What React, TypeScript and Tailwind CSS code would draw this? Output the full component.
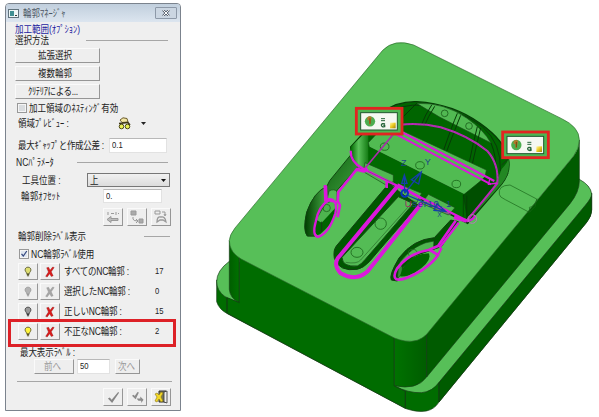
import React from "react";

const jp = "font-['Liberation_Sans','Noto_Sans_CJK_JP',sans-serif]";

function Label({ children, className = "" }: { children: React.ReactNode; className?: string }) {
  return (
    <span className={`inline-block origin-left scale-x-[0.85] whitespace-nowrap ${className}`}>{children}</span>
  );
}

function Btn({ children, className = "" }: { children: React.ReactNode; className?: string }) {
  return (
    <button
      className={`flex shrink-0 items-center justify-center border border-t-[#fafafa] border-l-[#fafafa] border-r-[#969696] border-b-[#969696] bg-[#eeeeee] ${className}`}
    >
      {children}
    </button>
  );
}

function Field({ children, className = "" }: { children: React.ReactNode; className?: string }) {
  return (
    <div className={`flex shrink-0 items-center border border-[#e2e2e2] border-t-[#b8b8b8] bg-white pl-[2px] ${className}`}>
      <Label>{children}</Label>
    </div>
  );
}

function Check({ on = false }: { on?: boolean }) {
  return (
    <div className="h-[10px] w-[10px] shrink-0 border border-[#989898] bg-[#f5f5f5]">
      <svg viewBox="0 0 8 8" className="block h-[8px] w-[8px]">
        <rect x="1" y="1" width="6" height="6" fill={on ? "#dfe6f0" : "#d9dcdf"} />
        {on && <path d="M1.5 3.8 3.3 6 6.8 1" fill="none" stroke="#33477e" strokeWidth="1.2" />}
      </svg>
    </div>
  );
}

function Bulb({ fill, stroke }: { fill: string; stroke: string }) {
  return (
    <svg viewBox="0 0 12 14" className="h-[12px] w-[10px]">
      <path d="M6 1.2C3.7 1.2 2.5 2.8 2.5 4.5 2.5 6.5 4.3 7 4.4 9H7.6C7.7 7 9.5 6.5 9.5 4.5 9.5 2.8 8.3 1.2 6 1.2Z" fill={fill} stroke={stroke} />
      <path d="M4.5 10h3M4.7 11.5h2.6" stroke={stroke} strokeWidth="1.2" />
    </svg>
  );
}

function Cross({ color, edge }: { color: string; edge: string }) {
  return (
    <svg viewBox="0 0 12 14" className="h-[12px] w-[10px]">
      <path d="M2 2 4.4 1.4 6 5 9.2 1 11 1.6 7.5 6.8 9.8 11.6 7.5 12.4 5.6 9 2.6 13 .8 12.2 4.1 7Z" fill={color} stroke={edge} strokeWidth=".4" />
    </svg>
  );
}

function LabelRow({ text, count, bulb, edge, off = false }: { text: string; count: string; bulb: string; edge: string; off?: boolean }) {
  return (
    <div className="flex h-[17px] items-center">
      <Btn className="h-[17px] w-[20px]"><Bulb fill={bulb} stroke={edge} /></Btn>
      <Btn className="ml-[2px] h-[17px] w-[20px]">
        <Cross color={off ? "#a6a6a6" : "#dc1c1c"} edge={off ? "#8c8c8c" : "#7d0c0c"} />
      </Btn>
      <div className="ml-[4px] w-[91px] text-[10px]"><Label className="tracking-[-0.25px]">{text}</Label></div>
      <Label className="text-[9px]">{count}</Label>
    </div>
  );
}

const grayRule = "h-px bg-[#a6a6a6]";

function Dialog() {
  return (
    <section className={`relative mt-[3px] ml-[5px] flex h-[408px] w-[176px] shrink-0 flex-col rounded-t-[4px] border border-[#7b838d] bg-[#efefef] text-[10px] leading-[11px] text-[#222] ${jp}`}>
      <header className="flex h-[18px] shrink-0 items-center rounded-t-[3px] bg-linear-to-b from-[#c1cfdd] to-[#dce5ef] pl-[2px]">
        <svg viewBox="0 0 11 9" className="h-[9px] w-[11px]">
          <rect x=".5" y=".5" width="10" height="8" fill="#eef6f6" stroke="#61737d" />
          <path d="M2 2h4v5H2z" fill="#3f8f92" />
          <path d="M7 6h2v1H7z" fill="#333" />
        </svg>
        <div className="ml-[4px] w-[132px] text-[#4b5561]"><Label>輪郭ﾏﾈｰｼﾞｬ</Label></div>
        <button className="flex h-[12px] w-[22px] items-center justify-center rounded-[1px] border border-[#8d99a8] bg-[#cbd6e2]">
          <svg viewBox="0 0 8 6" className="h-[6px] w-[8px]">
            <path d="m1 0 6 6M7 0 1 6" stroke="#5b6470" strokeWidth="2.4" />
            <path d="m1.2.2 5.6 5.6M6.8.2 1.2 5.8" stroke="#fff" strokeWidth="1" />
          </svg>
        </button>
      </header>
      <div className="mt-[2px] h-[11px] pl-[9px] text-[#1c1ca0]"><Label>加工範囲(ｵﾌﾟｼｮﾝ)</Label></div>
      <div className="flex h-[11px] items-center pl-[9px]">
        <div className="w-[71px]"><Label>選択方法</Label></div>
        <div className={`w-[82px] ${grayRule}`} />
      </div>
      <div className="mt-[2px] flex flex-col gap-[3px] pl-[9px]">
        <Btn className="h-[15px] w-[85px]"><Label className="origin-center">拡張選択</Label></Btn>
        <Btn className="h-[15px] w-[85px]"><Label className="origin-center">複数輪郭</Label></Btn>
        <Btn className="h-[15px] w-[85px]"><Label className="origin-center tracking-[-0.4px]">ｸﾘﾃﾘｱによる...</Label></Btn>
      </div>
      <div className="mt-[2px] flex h-[14px] items-center gap-[2px] pl-[11px]">
        <Check /><Label>加工領域のﾈｽﾃｨﾝｸﾞ有効</Label>
      </div>
      <div className="flex h-[16px] items-center pl-[12px]">
        <div className="w-[100px]"><Label className="tracking-[-0.1px]">領域ﾌﾟﾚﾋﾞｭｰ :</Label></div>
        <svg viewBox="0 0 13 13" className="h-[13px] w-[13px]">
          <path d="M2 3 5 .8 9 1.5 10 5 4 5.5Z" fill="#f2e6a4" stroke="#6b5c2c" />
          <path d="M1 6.5 10 5.5 12 8" fill="none" stroke="#3d3515" strokeWidth="1.5" />
          <circle cx="3.5" cy="9.5" r="2.3" fill="#e8ee54" stroke="#4d4a18" />
          <circle cx="9.5" cy="9.5" r="2.3" fill="#e8ee54" stroke="#4d4a18" />
        </svg>
        <svg viewBox="0 0 5 3" className="ml-[10px] h-[3px] w-[5px]"><path d="M0 0h5L2.5 3Z" fill="#222" /></svg>
      </div>
      <div className="mt-[7px] flex h-[15px] items-center pl-[12px]">
        <div className="w-[91px]"><Label className="tracking-[-0.35px]">最大ｷﾞｬｯﾌﾟと作成公差 :</Label></div>
        <Field className="h-[15px] w-[58px] text-[9px]">0.1</Field>
      </div>
      <div className="mt-[3px] flex h-[12px] items-center pl-[10px]">
        <div className="w-[61px]"><Label>NCﾊﾟﾗﾒｰﾀ</Label></div>
        <div className={`w-[91px] ${grayRule}`} />
      </div>
      <div className="mt-[5px] flex h-[14px] items-center pl-[16px]">
        <div className="w-[65px]"><Label>工具位置 :</Label></div>
        <div className="flex h-[14px] w-[83px] items-center justify-between border border-[#777] bg-linear-to-b from-[#f1f1f1] to-[#dcdcdc] pr-[3px] pl-[2px]">
          <Label>上</Label>
          <svg viewBox="0 0 5 3" className="h-[3px] w-[5px]"><path d="M0 0h5L2.5 3Z" fill="#111" /></svg>
        </div>
      </div>
      <div className="mt-[2px] flex h-[14px] items-center pl-[15px]">
        <div className="w-[82px]"><Label className="tracking-[0.2px]">輪郭ｵﾌｾｯﾄ</Label></div>
        <Field className="h-[14px] w-[59px] text-[9px]">0.</Field>
      </div>
      <div className="mt-[5px] flex h-[18px] gap-[4px] pl-[97px]">
        <Btn className="h-[18px] w-[20px]">
          <svg viewBox="0 0 14 14" className="h-[14px] w-[14px]" fill="none" stroke="#999">
            <path d="M2 2v3M5 3.5h3M10 2v3M12 3.5h1" />
            <path d="m1 9.5 4-3v2h7v2H5v2Z" fill="#bbb" />
          </svg>
        </Btn>
        <Btn className="h-[18px] w-[20px]">
          <svg viewBox="0 0 14 14" className="h-[14px] w-[14px]" fill="#aaa" stroke="#999">
            <path d="M1 1h5v4H1zM9 9h4v4H9z" />
            <path d="M3 7v2q0 2 5 2M6 9l2 2-2 2" fill="none" />
          </svg>
        </Btn>
        <Btn className="h-[18px] w-[20px]">
          <svg viewBox="0 0 14 14" className="h-[14px] w-[14px]" fill="none" stroke="#999">
            <path d="M1 1h5v3H1zM8 2h3v3M10 4l1 2 1-2" />
            <path d="M3 12Q3 6 7 7q4-1 5 5l-3-2H6Z" strokeWidth="1.3" />
          </svg>
        </Btn>
      </div>
      <div className="mt-[5px] flex h-[11px] items-center pl-[12px]">
        <div className="w-[126px]"><Label>輪郭削除ﾗﾍﾞﾙ表示</Label></div>
        <div className={`w-[26px] ${grayRule}`} />
      </div>
      <div className="mt-[6px] flex h-[12px] items-center gap-[2px] pl-[13px]">
        <Check on /><Label>NC輪郭ﾗﾍﾞﾙ使用</Label>
      </div>
      <div className="mt-[3px] flex flex-col gap-[3px] pl-[12px]">
        <LabelRow text="すべてのNC輪郭 :" count="17" bulb="#dede70" edge="#55552b" />
        <LabelRow text="選択したNC輪郭 :" count="0" bulb="#b3b3b3" edge="#999" off />
        <LabelRow text="正しいNC輪郭 :" count="15" bulb="#999" edge="#3b3b3b" />
        <LabelRow text="不正なNC輪郭 :" count="2" bulb="#fff53a" edge="#5c5620" />
      </div>
      <div className="mt-[7px] h-[11px] pl-[14px]"><Label className="tracking-[-0.1px]">最大表示ﾗﾍﾞﾙ :</Label></div>
      <div className="mt-[1px] flex h-[15px] pl-[28px] text-[#999]">
        <Btn className="h-[15px] w-[40px]"><Label className="origin-center">前へ</Label></Btn>
        <Field className="ml-[3px] h-[15px] w-[33px] text-[9px] text-[#222]">50</Field>
        <Btn className="ml-[5px] h-[15px] w-[25px]"><Label className="origin-center">次へ</Label></Btn>
      </div>
      <div className={`mt-[7px] ml-[11px] w-[155px] shrink-0 ${grayRule}`} />
      <div className="mt-[6px] flex h-[18px] gap-[4px] pl-[97px]">
        <Btn className="h-[18px] w-[20px]">
          <svg viewBox="0 0 14 14" className="h-[13px] w-[13px]"><path d="m1 8 2-1 2 2.5L12 1l1 1-7.5 11Z" fill="#858585" /></svg>
        </Btn>
        <Btn className="h-[18px] w-[20px]">
          <svg viewBox="0 0 14 14" className="h-[13px] w-[13px]" fill="#8b8b8b">
            <path d="m1 5 2-1 1 1.5L7 1l1.5.5L5 9Z" />
            <path d="M6 8h4v-2l3.5 3.5L11 13v-2.5H8Z" />
          </svg>
        </Btn>
        <Btn className="h-[18px] w-[20px]">
          <svg viewBox="0 0 14 14" className="h-[14px] w-[14px]">
            <path d="M5 1h7v11H5z" fill="#77775b" stroke="#333" />
            <path d="M10 2 13 1v12l-3-1Z" fill="#eee" stroke="#333" strokeWidth=".8" />
            <path d="m1 4 2-1 2 2 2-3 2 1-2 4 2 4-2 1-2-3-2 3-2-1 2-4Z" fill="#f2d829" stroke="#8b7514" strokeWidth=".6" />
          </svg>
        </Btn>
      </div>
      <div className="pointer-events-none absolute top-[315px] left-[2px] h-[28px] w-[168px] border-[3px] border-[#dd2127]" />
    </section>
  );
}

function Tag({ x, y }: { x: number; y: number }) {
  return (
    <g transform={`translate(${x} ${y})`}>
      <rect x="4" y="4" width="137" height="77" fill="#4db653" stroke="#e22421" strokeWidth="8.5" />
      <rect x="17" y="17" width="110" height="52" fill="#f5f8f2" stroke="#1f572e" strokeWidth="3" />
      <circle cx="45" cy="43" r="15.5" fill="#4cad4f" />
      <path d="M37 31q8-6 13 0l-2 12-2 10-4-2V40h-5Z" fill="#b5772c" />
      <path d="M45 34v16" stroke="#70460d" strokeWidth="3" />
      <path d="M78 35h12M78 41h12" stroke="#27653b" strokeWidth="3" />
      <path d="M90 51q-10-3-11 3 1 7 10 5v-4h-4" fill="none" stroke="#27653b" strokeWidth="4" />
      <rect x="105" y="47" width="17" height="17" fill="url(#gold)" />
    </g>
  );
}

function Model() {
  return (
    <svg viewBox="0 0 1197 1251" className="block h-[417px] w-[399px] shrink-0">
      <defs>
        <linearGradient id="gold" x1="0" y1="0" x2="1" y2="1"><stop stopColor="#fff6a5" /><stop offset=".5" stopColor="#ebc91e" /><stop offset="1" stopColor="#9d7e12" /></linearGradient>
        <linearGradient id="corner"><stop stopColor="#005e00" /><stop offset="1" stopColor="#007200" /></linearGradient>
        <linearGradient id="bend"><stop stopColor="#007200" /><stop offset="1" stopColor="#005c00" /></linearGradient>
        <linearGradient id="wall"><stop stopColor="#006800" /><stop offset=".45" stopColor="#5ac25a" /><stop offset="1" stopColor="#147b14" /></linearGradient>
        <linearGradient id="groove" x1="0" y1="0" x2="1" y2="1"><stop stopColor="#004c00" /><stop offset="1" stopColor="#54bb54" /></linearGradient>
        <linearGradient id="hook"><stop stopColor="#003d00" /><stop offset="1" stopColor="#48ad48" /></linearGradient>
      </defs>

      {/* flange */}
      <g stroke="#163b16" strokeWidth="2" strokeLinejoin="round">
        <path d="M50 840V905Q57 928 82 941L618 1226Q690 1250 717 1206L1160 667Q1175 648 1175 630V580L700 1100 100 850Z" fill="#006c00" />
        <path d="M717 1147 1155 617Q1175 594 1175 580V630Q1175 648 1160 667L717 1206Z" fill="#005b00" />
        <path d="M50 845Q50 812 88 784L200 800 583 1157Q625 1180 665 1178 697 1175 717 1147L1155 617Q1175 594 1175 582 1172 556 1138 538L650 900 118 908 75 890Q50 872 50 845Z" fill="#57bf58" />
      </g>
      {/* block walls */}
      <g stroke="#163b16" strokeWidth="2" strokeLinejoin="round">
        <path d="M88 722V868Q90 895 118 908V770Z" fill="url(#corner)" />
        <path d="M118 770 583 1010V1158L616 1174V1225L82 940V894L118 908Z" fill="#006c00" />
        <path d="M583 1010V1157Q650 1172 680 1131V1000Z" fill="url(#bend)" />
        <path d="M680 1000 1121 468Q1138 444 1138 420V542Q1138 576 1110 611L680 1131Z" fill="#005b00" />
      </g>
      <path d="M80 893V938" stroke="#123e12" strokeWidth="2" />
      <path d="M616 1174V1225M716 1148V1205" stroke="#123e12" strokeWidth="2" />
      <path d="M84 895 116 909 V935 H84Z" fill="#006c00" />
      <path d="M88 722Q88 706 105 684L548 151Q583 115 641 135L1085 356Q1138 381 1138 420 1138 446 1121 468L680 1003Q655 1029 615 1023 598 1020 583 1014L125 778Q88 757 88 722Z" fill="#57bf58" stroke="#2a682a" strokeWidth="2" />

      {/* round slot on the right */}
      <path d="m898 583q-5-27 32-28l80 42-5 23-17 17-72-38q-18-8-18-16m92 53-2-14q16-1 24-26" fill="none" stroke="#176317" strokeWidth="2" />

      {/* large recess */}
      <path d="M452 441 548 337Q590 303 650 305 760 312 840 370 914 422 925 475 934 517 905 552L803 670 495 512Q455 493 452 441Z" fill="#006500" stroke="#063d06" strokeWidth="4" />
      <path d="M550 346Q605 310 668 316 778 325 847 380 905 430 901 513" fill="none" stroke="#0b380b" strokeWidth="3" />
      <path d="M650 310Q733 307 800 354 851 389 873 429L720 352Z" fill="#51b952" stroke="#194c19" strokeWidth="2" />
      <path d="M452 441 505 388V510Q457 499 452 441Z" fill="url(#wall)" />
      <path d="M604 375 610 350 650 310M695 315Q675 345 664 375M704 319Q684 350 673 378M772 340Q755 380 731 450M782 346Q762 395 740 454M832 380Q819 430 808 486M842 384Q829 437 817 492M873 429Q890 470 887 512" fill="none" stroke="#063906" strokeWidth="3" />
      <path d="M905 495 930 472M905 552 924 520" stroke="#173b17" strokeWidth="3" />
      <path d="M905 507Q925 486 925 475 934 517 905 552L815 652Q887 560 905 507Z" fill="#238723" />
      <g fill="none" stroke="#1b5d1b" strokeWidth="2.5"><circle cx="734" cy="340" r="10" /><circle cx="807" cy="378" r="10" /></g>

      {/* insert block */}
      <path d="M505 428 550 380 594 386 859 510 855 530 800 587 508 441Z" fill="#51bb52" stroke="#194e19" strokeWidth="2" />
      <path d="M508 441 800 587V660L583 550 508 490Z" fill="#006900" />
      <path d="M790 585 858 530 882 555 802 655Z" fill="#004f00" stroke="#073c07" strokeWidth="2" />
      <path d="M790 585V650M800 587V657" stroke="#063806" strokeWidth="2" />
      <path d="M495 488 580 525V545L558 555 490 515Z" fill="#51b852" stroke="#174c17" strokeWidth="2" />
      <path d="M593 550 665 580 650 608 590 580ZM685 583 765 623 745 645 665 610Z" fill="#51b852" stroke="#174c17" strokeWidth="2" />
      <g fill="none" stroke="#1b651b" strokeWidth="2.5"><ellipse cx="554" cy="440" rx="13" ry="11" /><ellipse cx="660" cy="496" rx="13" ry="11" /><ellipse cx="769" cy="552" rx="13" ry="11" /></g>

      {/* left arm and hook */}
      <path d="M452 465 389 542 380 560Q342 575 320 637 308 692 322 708H345Q338 672 382 615L412 570 475 500Z" fill="url(#groove)" stroke="#104710" strokeWidth="3" />
      <path d="M380 560Q342 575 320 637 308 692 322 708H345Q338 672 382 602Z" fill="url(#hook)" stroke="#124012" strokeWidth="2" />
      <path d="M387 573Q403 565 411 575V605L380 605Z" fill="#55bc56" stroke="#184c18" strokeWidth="2" />
      <path d="M408 607Q423 650 361 702 342 714 344 680 346 665 354 659 394 642 408 607Z" fill="#006300" />
      <path d="M349 659 380 608Q408 604 406 624L365 668Z" fill="#4eb44f" />
      <path d="M365 665V694" stroke="#153c15" strokeWidth="3" />
      <circle cx="380" cy="624" r="11" fill="none" stroke="#216621" strokeWidth="2.5" />

      {/* center channel */}
      <path d="M567 550 409 738Q399 751 403 775 417 816 472 808 490 804 508 785L654 615 600 577Z" fill="#005700" stroke="#123f12" strokeWidth="3" />
      <path d="M595 590 426 772Q427 802 472 798 482 795 496 778L640 611Z" fill="#54bc55" stroke="#154c15" strokeWidth="3" />
      <path d="M635 609 482 780Q471 793 437 787" fill="none" stroke="#276a27" strokeWidth="2" />
      <g fill="none" stroke="#1b651b" strokeWidth="2.5"><circle cx="542" cy="671" r="17" /><ellipse cx="471" cy="757" rx="18" ry="15" /></g>

      {/* right arm and hook */}
      <path d="M752 660 703 713Q639 718 597 774 566 826 574 840L592 843Q590 810 646 767L724 740 775 665Z" fill="#005600" stroke="#103d10" strokeWidth="3" />
      <path d="M702 723Q646 728 600 786L595 804Q630 760 701 745Z" fill="#4fb550" stroke="#174817" strokeWidth="2" />
      <path d="M596 793 607 800V820L592 836Z" fill="#398e39" stroke="#163a16" strokeWidth="2" />
      <path d="M607 806Q637 760 686 760 699 782 646 817 620 832 600 829Z" fill="#006500" />
      <path d="M703 716V740" stroke="#123e12" strokeWidth="3" />
      <ellipse cx="638" cy="759" rx="13" ry="11" fill="none" stroke="#236b23" strokeWidth="2.5" />

      {/* tool path contours */}
      <g fill="none" stroke="#db18dc" strokeLinejoin="round">
        <path d="M600 374Q662 367 722 382 803 406 862 453 897 492 892 550L802 660" stroke="#bd25bb" strokeWidth="6" />
        <path d="M600 374Q662 367 722 382 803 406 862 453 897 492 892 550" stroke="#79547d" strokeWidth="2" strokeDasharray="4 6" />
        <path d="M495 505 593 387" stroke="#a92ba9" strokeWidth="5" />
        <path d="m590 388 293 155M579 398l294 155" strokeWidth="6" />
        <path d="m592 382-5 16M870 535l-5 18 27-4" strokeWidth="4" />
        <path d="M452 452Q451 485 487 505L803 663Q820 660 826 646" strokeWidth="7" />
        <path d="M470 508 492 513 502 505M762 652 800 663" strokeWidth="11" />
        <path d="M505 515 584 551M665 605 752 644" stroke="#a331a5" strokeWidth="3" />
        <path d="m472 506-57 70-2 27 7 13-7 36" strokeWidth="8" />
        <path d="m375 555 4 44Q416 591 406 640 386 701 354 711 336 706 347 666 356 617 387 601L412 607" strokeWidth="7" />
        <path d="m376 557 2 48" strokeWidth="11" />
        <path d="M593 558 413 775Q400 795 422 820 468 846 503 814L665 610" strokeWidth="12" />
        <path d="m593 554 72 42M560 544v20" strokeWidth="8" />
        <path d="m767 662-53 76-28 12Q625 760 591 806 578 829 588 837 606 846 667 810 700 787 714 765L690 750" strokeWidth="8" />
        <path d="m776 668-58 75M725 744 712 768" strokeWidth="7" />
        <circle cx="817" cy="657" r="13" stroke="#b879b8" strokeWidth="3" />
      </g>

      {/* coordinate system */}
      <g fill="none" stroke="#153eaa" strokeWidth="4">
        <path d="M614 580 613 526M605 550 613 525 621 550ZM614 580 660 521M634 539 664 516 656 552ZM620 585 737 634M711 611 737 634 702 631Z" />
        <circle cx="614" cy="580" r="10" stroke="#0834bd" strokeWidth="6" />
      </g>
      <g fill="#1d4389" fontFamily="Liberation Sans, sans-serif">
        <text x="603" y="499" fontSize="27">Z</text>
        <text x="674" y="496" fontSize="27">Y</text>
        <text x="712" y="650" fontSize="20">X</text>
        <text x="614" y="622" fontSize="29" textLength="140"><tspan fill="#a02b62">U</tspan>ser10. 1</text>
      </g>
      <Tag x={465} y={321} />
      <Tag x={904} y={392} />
    </svg>
  );
}

export default function App() {
  return (
    <main className="flex h-[417px] w-[599px] overflow-hidden bg-white">
      <Dialog />
      <div className="ml-[19px] shrink-0"><Model /></div>
    </main>
  );
}
